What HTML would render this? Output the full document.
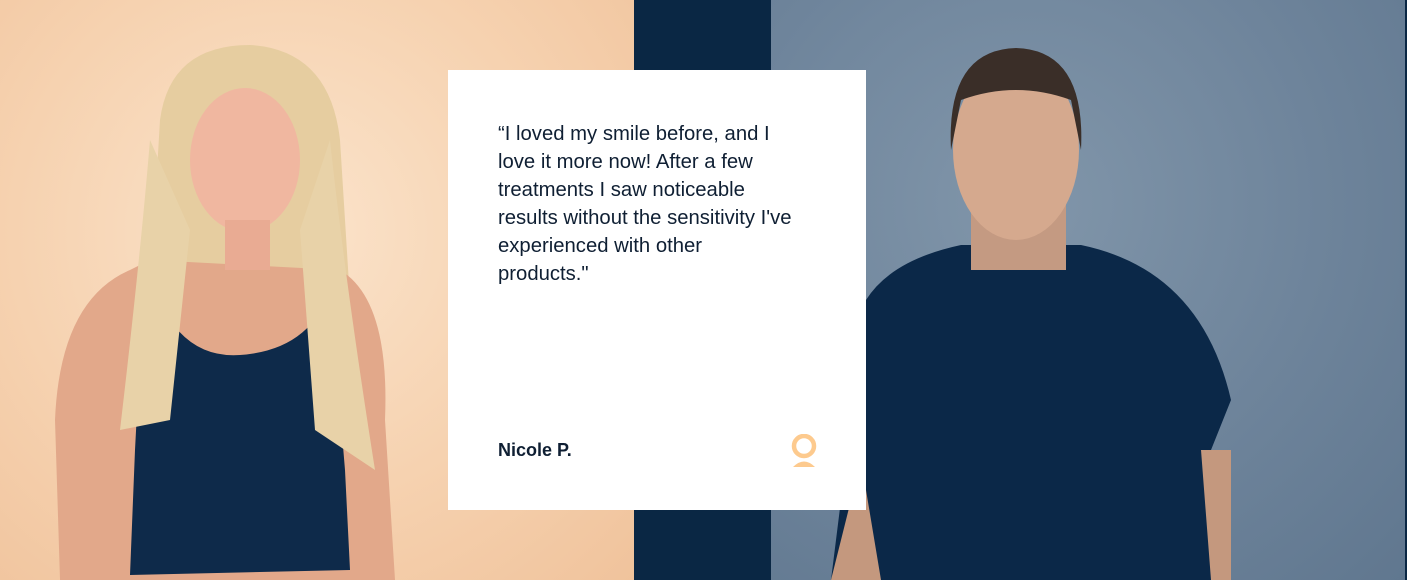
<!DOCTYPE html>
<html><head><style>
body{margin:0;width:1407px;height:580px;overflow:hidden;position:relative;font-family:"Liberation Sans",sans-serif;background:#0a2744}
.l{position:absolute;left:0;top:0;width:634px;height:580px;background:radial-gradient(ellipse at 45% 40%,#fbe4cc 0%,#f6d2b0 55%,#f0c39c 100%)}
.r{position:absolute;left:771px;top:0;width:634px;height:580px;background:radial-gradient(ellipse at 40% 35%,#8196aa 0%,#6e849b 55%,#60778f 100%)}
.card{position:absolute;left:448px;top:70px;width:418px;height:440px;background:#fff}
.q{position:absolute;left:50px;top:50px;white-space:nowrap;font-size:20.3px;line-height:28px;color:#0f1f33}
.n{position:absolute;left:50px;top:370px;font-size:18px;font-weight:bold;color:#0f1f33}
</style></head><body>
<div class="l">
<svg width="634" height="580" style="position:absolute;left:0;top:0">
<path d="M160 120 Q170 45 250 45 Q330 50 340 140 L350 300 L375 470 L320 440 L200 440 L110 450 L150 290 Z" fill="#e6cda0"/>
<path d="M60 580 L55 420 Q60 300 130 270 L150 260 L340 270 Q390 300 385 420 L395 580 Z" fill="#e2a88a"/>
<ellipse cx="245" cy="160" rx="55" ry="72" fill="#f0b7a0"/>
<rect x="225" y="220" width="45" height="50" fill="#e9ab93"/>
<path d="M145 260 Q170 360 240 355 Q310 350 330 290 L345 470 L350 570 L130 575 L135 450 Z" fill="#0e2a4a"/>
<path d="M150 140 Q140 260 120 430 L170 420 L190 230 Z M330 140 Q345 280 375 470 L315 430 L300 230 Z" fill="#e8d2a8"/>
</svg>
</div>
<div class="r">
<svg width="634" height="580" style="position:absolute;left:0;top:0">
<path d="M60 580 L95 300 Q120 260 190 245 L310 245 Q430 270 460 400 L440 450 L450 580 Z" fill="#0b2848"/>
<rect x="200" y="200" width="95" height="70" fill="#c49a82"/>
<ellipse cx="245" cy="150" rx="63" ry="90" fill="#d5a98e"/>
<path d="M180 150 Q175 50 245 48 Q315 50 310 150 L300 100 Q245 80 190 100 Z" fill="#3a2e28"/>
<path d="M90 460 L60 580 L110 580 Z M430 450 L440 580 L460 580 L460 450 Z" fill="#c4987e"/>
</svg>
</div>
<div style="position:absolute;left:1405px;top:0;width:2px;height:580px;background:#0a2744"></div>
<div class="card">
<div class="q">“I loved my smile before, and I<br>love it more now! After a few<br>treatments I saw noticeable<br>results without the sensitivity I've<br>experienced with other<br>products."</div>
<div class="n">Nicole P.</div>
<svg style="position:absolute;left:342px;top:364px" width="28" height="36">
<circle cx="14" cy="12" r="10" fill="none" stroke="#fdca8e" stroke-width="4.5"/>
<path d="M3 33 Q14 22 25 33 Z" fill="#fdca8e"/>
</svg>
</div>
</body></html>
